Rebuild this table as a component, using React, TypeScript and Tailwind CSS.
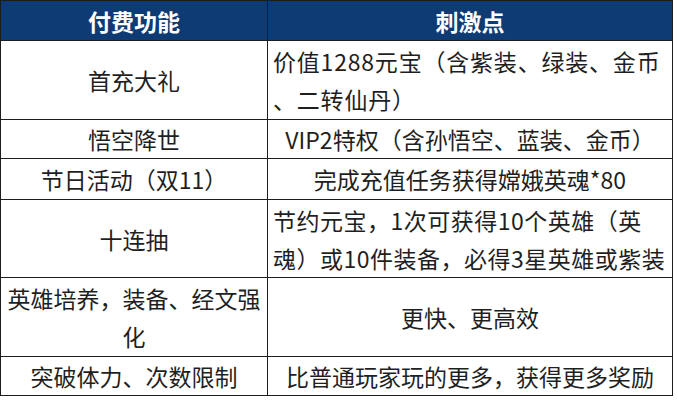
const rows: {
  left: React.ReactNode;
  right: React.ReactNode;
  align?: "left";
  tracking?: string;
}[] = [
  {
    left: "首充大礼",
    right: (
      <>
        价值1288元宝（含紫装、绿装、金币
        <br />
        、二转仙丹）
      </>
    ),
    align: "left",
    tracking: "tracking-[0.8px]",
  },
  { left: "悟空降世", right: "VIP2特权（含孙悟空、蓝装、金币）" },
  { left: "节日活动（双11）", right: "完成充值任务获得嫦娥英魂*80" },
  {
    left: "十连抽",
    right: (
      <>
        节约元宝，1次可获得10个英雄（英
        <br />
        魂）或10件装备，必得3星英雄或紫装
      </>
    ),
    align: "left",
    tracking: "tracking-[0.5px]",
  },
  {
    left: (
      <>
        英雄培养，装备、经文强
        <br />
        化
      </>
    ),
    right: "更快、更高效",
  },
  { left: "突破体力、次数限制", right: "比普通玩家玩的更多，获得更多奖励" },
];

export default function App() {
  return (
    <div
      className="min-h-[400px] w-[678px] bg-white"
      style={{ fontFamily: '"Noto Sans CJK SC", "Noto Sans", sans-serif' }}
    >
      <div className="grid w-[673px] grid-cols-[266px_404px] grid-rows-[39px_78px_38px_40px_77px_78px_38px] gap-px bg-[#1c1c1c] p-px text-[23px] leading-[38px] text-[#1f1f1f]">
        <div className="flex items-center justify-center bg-[#0e3b74] font-bold text-white">
          付费功能
        </div>
        <div className="flex items-center justify-center bg-[#0e3b74] font-bold text-white">
          刺激点
        </div>
        {rows.map((row, i) => (
          <Row key={i} {...row} />
        ))}
      </div>
    </div>
  );
}

function Row({
  left,
  right,
  align,
  tracking,
}: {
  left: React.ReactNode;
  right: React.ReactNode;
  align?: "left";
  tracking?: string;
}) {
  return (
    <>
      <div className="flex items-center justify-center bg-white text-center">
        <div className="whitespace-nowrap">{left}</div>
      </div>
      <div
        className={
          align === "left"
            ? "flex items-center bg-white pl-[5px]"
            : "flex items-center justify-center bg-white text-center"
        }
      >
        <div className={`whitespace-nowrap ${tracking ?? ""}`}>{right}</div>
      </div>
    </>
  );
}
